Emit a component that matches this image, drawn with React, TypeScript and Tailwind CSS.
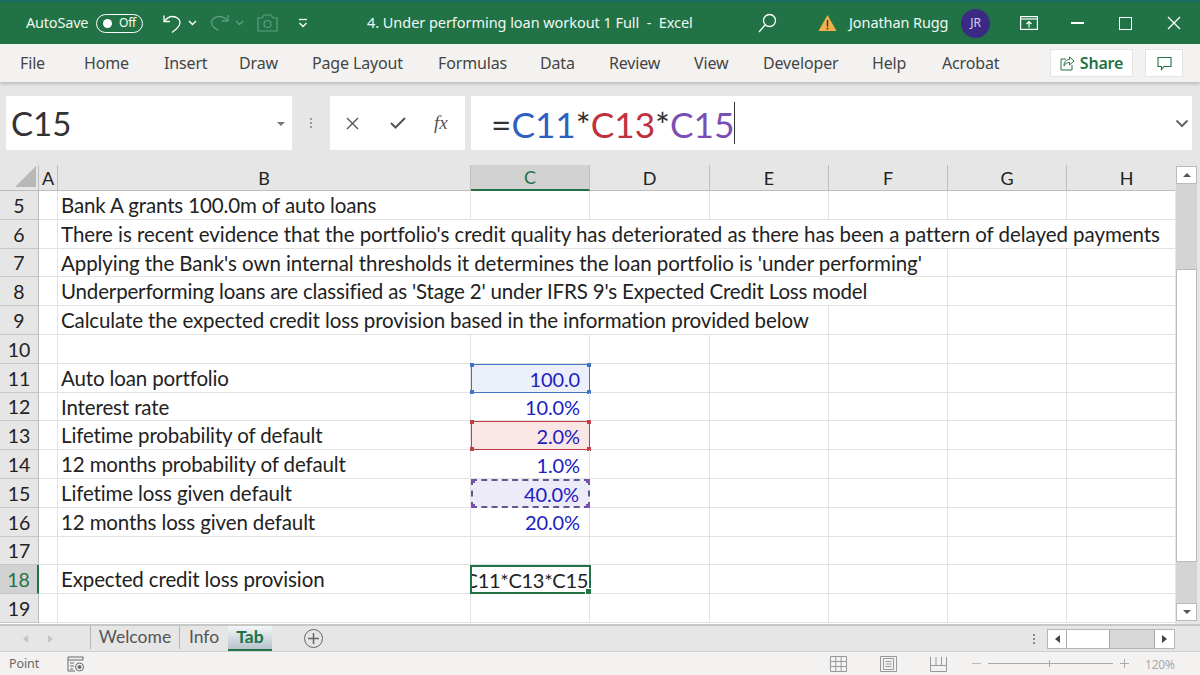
import React from "react";

const ui = "font-['Noto_Sans','Open_Sans',sans-serif]";
const cal = "font-['Lato','Noto_Sans',sans-serif]";
const cellText = "text-[20.5px] tracking-[-0.13px] pt-[1px]";
const valueText = "text-[20px] tracking-[-0.1px] pt-[1px]";

function Dots({ color }: { color: string }) {
  const p = ["left-[-2px] top-[-2px]", "right-[-2px] top-[-2px]", "left-[-2px] bottom-[-2px]", "right-[-2px] bottom-[-2px]"];
  return (
    <>
      {p.map((c) => (
        <span key={c} className={`absolute w-[4px] h-[4px] ${c} ${color}`} />
      ))}
    </>
  );
}

const RowHeader = ({ n, active }: { n: number; active?: boolean }) => (
  <div
    className={`w-[39px] shrink-0 flex items-center justify-center pt-[1px] text-[19.5px] border-b border-r ${
      active ? "bg-[#d2d2d2] text-[#217346] border-b-[#c6c6c6] border-r-2 border-r-[#217346]" : "bg-[#e6e6e6] text-[#222] border-b-[#c6c6c6] border-r-[#bdbdbd]"
    }`}
  >
    {n}
  </div>
);

const colW = ["w-[19px]", "w-[413px]", "w-[119px]", "w-[120px]", "w-[119px]", "w-[119px]", "w-[119px]", "w-[120px]"];

function Row({ n, text, active, children }: { n: number; text?: string; active?: boolean; children?: React.ReactNode }) {
  const rest = colW.slice(2);
  return (
    <div className="flex h-[28.8px]">
      <RowHeader n={n} active={active} />
      <div className="w-[19px] shrink-0 border-r border-b border-[#e2e2e2]" />
      <div className={`w-[413px] shrink-0 border-r border-b border-[#e2e2e2] pl-[3px] flex items-center whitespace-nowrap text-[#222] ${cellText}`}>{text}</div>
      {children}
      {rest.slice(children ? 1 : 0).map((w, i) => (
        <div key={i} className={`${w} shrink-0 border-r border-b border-[#e2e2e2]`} />
      ))}
    </div>
  );
}

function LongRow({ n, text, w, after, track }: { n: number; text: string; w: string; after: string[]; track: string }) {
  return (
    <div className="flex h-[28.8px]">
      <RowHeader n={n} />
      <div className="w-[19px] shrink-0 border-r border-b border-[#e2e2e2]" />
      <div className={`${w} shrink-0 border-r border-b border-[#e2e2e2] pl-[3px] pt-[1px] flex items-center whitespace-nowrap text-[#222] text-[20.5px] ${track}`}>{text}</div>
      {after.map((a, i) => (
        <div key={i} className={`${a} shrink-0 border-r border-b border-[#e2e2e2]`} />
      ))}
    </div>
  );
}

function ValueCell({ v, cls, dots, dotColor }: { v: string; cls?: string; dots?: boolean; dotColor?: string }) {
  return (
    <div className={`relative w-[119px] shrink-0 flex items-center justify-end pr-[9px] text-[#2020c0] ${valueText} ${cls ?? "border-r border-b border-[#e2e2e2]"}`}>
      {v}
      {dots && <Dots color={dotColor ?? ""} />}
    </div>
  );
}

const ColHead = ({ l, w, active }: { l: string; w: string; active?: boolean }) => (
  <div
    className={`${w} shrink-0 flex items-center justify-center pt-[1px] text-[18px] border-b border-r ${
      active ? "bg-[#d2d2d2] text-[#217346] border-b-2 border-b-[#217346] border-r-[#bdbdbd]" : "bg-[#e6e6e6] text-[#222] border-b-[#bdbdbd] border-r-[#bdbdbd]"
    }`}
  >
    {l}
  </div>
);

const Chev = ({ c = "#fff" }: { c?: string }) => (
  <svg width="9" height="6" viewBox="0 0 9 6" fill="none"><path d="M1 1l3.500 3.500L8 1" stroke={c} strokeWidth="1.400" /></svg>
);

function TitleBar() {
  return (
    <div className={`h-[44px] bg-[#217346] border-t-[2px] border-t-[#1a6a66] flex items-center text-white ${ui}`}>
      <span className="ml-[26px] text-[14.5px] text-[#eef5f0] w-[66px] tracking-[-0.2px]">AutoSave</span>
      <div className="ml-[4px] w-[47px] h-[19px] rounded-full border border-white flex items-center pl-[6px]">
        <span className="w-[9px] h-[9px] rounded-full bg-white" />
        <span className="ml-[7px] text-[12px] leading-none tracking-[-0.2px]">Off</span>
      </div>
      <svg className="ml-[20px]" width="19" height="22" viewBox="0 0 19 22" fill="none" stroke="#fff" strokeWidth="1.300">
        <path d="M1 3.500v6h6" /><path d="M1.300 9.200C3.500 6.500 6 4.500 9.500 4.500c4 0 7.500 2.400 7.500 6 0 3-2.400 6-8 10" />
      </svg>
      <span className="ml-[6px] flex"><Chev /></span>
      <svg className="ml-[12px]" width="20" height="20" viewBox="0 0 20 20" fill="none" stroke="#5f9d7c" strokeWidth="1.300">
        <path d="M19 2v6h-6" /><path d="M18.700 7.800C16.500 5.200 14 3.500 10.500 3.500c-4 0-8 2.400-8 6 0 3 2.400 5.500 7 8" />
      </svg>
      <span className="ml-[6px] flex"><Chev c="#5f9d7c" /></span>
      <svg className="ml-[13px]" width="21" height="18" viewBox="0 0 21 18" fill="none" stroke="#5f9d7c" strokeWidth="1.200">
        <path d="M1 4h4l2-3h7l2 3h4v13H1z" /><circle cx="10.500" cy="10" r="3.500" />
      </svg>
      <svg className="ml-[20px]" width="10" height="10" viewBox="0 0 10 10" fill="none" stroke="#fff" strokeWidth="1.300">
        <path d="M1 1.500h8" /><path d="M1.500 5l3.500 3.500L8.500 5" />
      </svg>
      <span className="ml-[59px] text-[14.5px] text-[#f2f7f4] w-[340px] whitespace-pre tracking-[-0.05px]">4. Under performing loan workout 1 Full  -  Excel</span>
      <svg className="ml-[51px]" width="19" height="20" viewBox="0 0 19 20" fill="none" stroke="#fff" strokeWidth="1.300">
        <circle cx="11.500" cy="7.500" r="6" /><path d="M7 12L1 19" />
      </svg>
      <svg className="ml-[41px]" width="19" height="18" viewBox="0 0 19 18">
        <path d="M9.500 1L18.500 17H0.500z" fill="#f2b04a" /><path d="M9.500 6v6.500M9.500 13.500v2" stroke="#3a3a3a" strokeWidth="1.500" />
      </svg>
      <span className="ml-[12px] text-[14.5px] text-[#f2f7f4] w-[101px] whitespace-nowrap tracking-[-0.1px]">Jonathan Rugg</span>
      <div className="ml-[11px] w-[29px] h-[29px] rounded-full bg-[#3a2a84] flex items-center justify-center text-[12px] text-[#d8d4f0]">JR</div>
      <svg className="ml-[30px]" width="18" height="14" viewBox="0 0 18 14" fill="none" stroke="#fff" strokeWidth="1.200">
        <rect x="0.600" y="0.600" width="16.800" height="12.800" /><path d="M1 3h16" /><path d="M9 11.500V5.500M6.500 8L9 5.500 11.500 8" />
      </svg>
      <span className="ml-[33px] w-[13px] h-[1.5px] bg-white" />
      <span className="ml-[35px] w-[13px] h-[13px] border-[1.5px] border-white" />
      <svg className="ml-[35px]" width="14" height="14" viewBox="0 0 14 14" stroke="#fff" strokeWidth="1.300"><path d="M1 1l12 12M13 1L1 13" /></svg>
    </div>
  );
}

function Tabs() {
  const t = [
    ["File", "ml-[20px] w-[26px]"],
    ["Home", "ml-[38px] w-[46px]"],
    ["Insert", "ml-[34px] w-[42px]"],
    ["Draw", "ml-[33px] w-[39px]"],
    ["Page Layout", "ml-[34px] w-[92px]"],
    ["Formulas", "ml-[34px] w-[68px]"],
    ["Data", "ml-[34px] w-[35px]"],
    ["Review", "ml-[34px] w-[51px]"],
    ["View", "ml-[34px] w-[35px]"],
    ["Developer", "ml-[34px] w-[75px]"],
    ["Help", "ml-[34px] w-[36px]"],
    ["Acrobat", "ml-[34px] w-[58px]"],
  ];
  return (
    <div className={`h-[38px] bg-[#f3f2f1] flex items-center text-[16px] text-[#444] shadow-[0_2px_3px_rgba(0,0,0,0.18)] relative ${ui}`}>
      {t.map(([l, c]) => (
        <span key={l} className={`${c} whitespace-nowrap tracking-[-0.15px]`}>{l}</span>
      ))}
      <div className="ml-[50px] w-[83px] h-[28px] bg-white border border-[#e4e4e4] flex items-center justify-center gap-[5px] text-[#217346] font-semibold">
        <svg width="15" height="15" viewBox="0 0 15 15" fill="none" stroke="#217346" strokeWidth="1">
          <path d="M6 3H1v11h11V9" /><path d="M14 5L9.500 1v2.500C6 3.500 4 6 4 10c1-2.500 3-3.500 5.500-3.500V9z" />
        </svg>
        <span className="tracking-[-0.2px]">Share</span>
      </div>
      <div className="ml-[12px] w-[38px] h-[28px] bg-white border border-[#e4e4e4] flex items-center justify-center">
        <svg width="15" height="15" viewBox="0 0 15 15" fill="none" stroke="#217346" strokeWidth="1.100"><path d="M1 1.500h13v9H7l-2.500 3v-3H1z" /></svg>
      </div>
    </div>
  );
}

function FormulaBar() {
  return (
    <div className={`h-[83px] bg-[#e6e6e6] flex pt-[14px] pb-[15px] ${cal}`}>
      <div className="ml-[6px] w-[286px] bg-white flex items-center justify-between pl-[5px] pr-[7px] pt-[2px] text-[33px] text-[#333]">
        <span>C15</span>
        <span className="w-0 h-0 border-x-[4px] border-x-transparent border-t-[4px] border-t-[#777]" />
      </div>
      <div className="w-[38px] flex flex-col items-center justify-center gap-[2px]">
        <span className="w-[2px] h-[2px] bg-[#999]" /><span className="w-[2px] h-[2px] bg-[#999]" /><span className="w-[2px] h-[2px] bg-[#999]" />
      </div>
      <div className="w-[135px] bg-white flex items-center text-[#444]">
        <svg className="ml-[16px]" width="13" height="13" viewBox="0 0 13 13" stroke="#555" strokeWidth="1.400"><path d="M1 1l11 11M12 1L1 12" /></svg>
        <svg className="ml-[31px]" width="16" height="12" viewBox="0 0 16 12" fill="none" stroke="#555" strokeWidth="2"><path d="M1 6l4.500 4.500L15 1" /></svg>
        <span className="ml-[28px] italic text-[19px] font-['Liberation_Serif',serif] text-[#555]">fx</span>
      </div>
      <div className="ml-[6px] w-[721px] bg-white flex items-center justify-between pl-[20px] pr-[3px] text-[35.2px]">
        <span className="border-r border-[#333] flex items-center pt-[2px] h-[42px] whitespace-nowrap">
          <span className="text-[#333]">=</span><span className="text-[#2f5fc0]">C11</span><span className="text-[#333]">*</span>
          <span className="text-[#c0313c]">C13</span><span className="text-[#333]">*</span><span className="text-[#7a4fb5]">C15</span>
        </span>
        <svg width="14" height="9" viewBox="0 0 14 9" fill="none"><path d="M1.500 1.500L7 7l5.500-5.500" stroke="#666" strokeWidth="2" /></svg>
      </div>
    </div>
  );
}

function Sheet() {
  return (
    <div className={`flex h-[459px] bg-white ${cal}`}>
      <div className="w-[1175px] shrink-0 flex flex-col overflow-hidden">
        <div className="flex h-[26px] shrink-0">
          <div className="w-[39px] shrink-0 bg-[#e6e6e6] border-r border-b border-[#bdbdbd] flex items-end justify-end pb-[3px] pr-[2px]">
            <span className="w-0 h-0 border-l-[21px] border-l-transparent border-b-[21px] border-b-[#b8b8b8]" />
          </div>
          <ColHead l="A" w="w-[19px]" />
          <ColHead l="B" w="w-[413px]" />
          <ColHead l="C" w="w-[119px]" active />
          <ColHead l="D" w="w-[120px]" />
          <ColHead l="E" w="w-[119px]" />
          <ColHead l="F" w="w-[119px]" />
          <ColHead l="G" w="w-[119px]" />
          <ColHead l="H" w="w-[120px]" />
        </div>
        <Row n={5} text="Bank A grants 100.0m of auto loans" />
        <LongRow n={6} w="w-[1129px]" after={[]} track="tracking-[-0.05px]" text="There is recent evidence that the portfolio's credit quality has deteriorated as there has been a pattern of delayed payments" />
        <LongRow n={7} w="w-[890px]" after={["w-[119px]", "w-[120px]"]} track="tracking-[-0.08px]" text="Applying the Bank's own internal thresholds it determines the loan portfolio is 'under performing'" />
        <LongRow n={8} w="w-[890px]" after={["w-[119px]", "w-[120px]"]} track="tracking-[-0.17px]" text="Underperforming loans are classified as 'Stage 2' under IFRS 9's Expected Credit Loss model" />
        <LongRow n={9} w="w-[771px]" after={["w-[119px]", "w-[119px]", "w-[120px]"]} track="tracking-[-0.12px]" text="Calculate the expected credit loss provision based in the information provided below" />
        <Row n={10} />
        <Row n={11} text="Auto loan portfolio">
          <ValueCell v="100.0" cls="bg-[#ecf0fb] border border-[#4472c4]" dots dotColor="bg-[#4472c4]" />
        </Row>
        <Row n={12} text="Interest rate">
          <ValueCell v="10.0%" />
        </Row>
        <Row n={13} text="Lifetime probability of default">
          <ValueCell v="2.0%" cls="bg-[#fbe6e6] border border-[#c0404a]" dots dotColor="bg-[#c0404a]" />
        </Row>
        <Row n={14} text="12 months probability of default">
          <ValueCell v="1.0%" />
        </Row>
        <Row n={15} text="Lifetime loss given default">
          <ValueCell v="40.0%" cls="bg-[#eeebf8] border-2 border-dashed border-[#5c5c8a]" dots dotColor="bg-[#7a4fb5]" />
        </Row>
        <Row n={16} text="12 months loss given default">
          <ValueCell v="20.0%" />
        </Row>
        <Row n={17} />
        <Row n={18} text="Expected credit loss provision" active>
          <div className="relative w-[121px] shrink-0 ml-[-1px] mr-[-1px] border-2 border-[#217346] flex items-center justify-end">
            <div className="w-full overflow-hidden flex justify-end pr-[1px] pt-[1px] text-[#222] whitespace-nowrap text-[20px] tracking-[-0.3px]">=C11*C13*C15</div>
            <span className="absolute right-[-3px] bottom-[-3px] w-[5px] h-[5px] bg-[#217346] border border-white box-content" />
          </div>
        </Row>
        <Row n={19} />
      </div>
      <div className="flex-1 bg-[#e6e6e6] flex flex-col pl-[1px] pr-[3px] pt-[1px]">
        <div className="h-[18px] bg-white border border-[#bbb] flex items-center justify-center shrink-0">
          <span className="w-0 h-0 border-x-[4px] border-x-transparent border-b-[4px] border-b-[#555]" />
        </div>
        <div className="h-[85px] bg-[#d4d4d4] shrink-0" />
        <div className="h-[293px] bg-white border border-[#bbb] shrink-0" />
        <div className="flex-1 bg-[#d4d4d4]" />
        <div className="h-[18px] mb-[3px] bg-white border border-[#bbb] flex items-center justify-center shrink-0">
          <span className="w-0 h-0 border-x-[4px] border-x-transparent border-t-[4px] border-t-[#555]" />
        </div>
      </div>
    </div>
  );
}

function SheetTabs() {
  return (
    <div className={`h-[27px] bg-[#e6e6e6] border-t-2 border-[#c8c8c8] flex items-stretch text-[#555] ${cal}`}>
      <span className="ml-[23px] self-center w-0 h-0 border-y-[4px] border-y-transparent border-r-[5px] border-r-[#c4c4c4]" />
      <span className="ml-[20px] self-center w-0 h-0 border-y-[4px] border-y-transparent border-l-[5px] border-l-[#c4c4c4]" />
      <div className="ml-[37px] mb-[2px] w-[90px] border-l border-r border-[#b5b5b5] flex items-center justify-center text-[17.5px]">Welcome</div>
      <div className="w-[48px] mb-[2px] flex items-center justify-center text-[17.5px]">Info</div>
      <div className="w-[44px] bg-linear-to-b from-[#f4f6f8] to-[#b7c3cd] border-b-2 border-[#217346] flex items-center justify-center text-[17.5px] font-bold text-[#217346]">Tab</div>
      <div className="ml-[32px] self-center w-[19px] h-[19px] rounded-full border border-[#666] flex items-center justify-center">
        <svg width="11" height="11" viewBox="0 0 11 11" stroke="#666" strokeWidth="1.500"><path d="M5.500 0v11M0 5.500h11" /></svg>
      </div>
      <div className="ml-[710px] self-center flex flex-col gap-[2px]">
        <span className="w-[2px] h-[2px] bg-[#888]" /><span className="w-[2px] h-[2px] bg-[#888]" /><span className="w-[2px] h-[2px] bg-[#888]" />
      </div>
      <div className="ml-[12px] self-center h-[20px] w-[128px] flex border border-[#b5b5b5] bg-[#d8d8d8]">
        <div className="w-[19px] bg-white border-r border-[#aaa] flex items-center justify-center">
          <span className="w-0 h-0 border-y-[4px] border-y-transparent border-r-[5px] border-r-[#444]" />
        </div>
        <div className="w-[43px] bg-white border-r border-[#aaa]" />
        <div className="flex-1" />
        <div className="w-[20px] bg-white border-l border-[#aaa] flex items-center justify-center">
          <span className="w-0 h-0 border-y-[4px] border-y-transparent border-l-[5px] border-l-[#444]" />
        </div>
      </div>
    </div>
  );
}

function StatusBar() {
  return (
    <div className={`h-[24px] bg-[#f3f2f1] border-t border-[#d0d0d0] flex items-center text-[#666] ${ui}`}>
      <span className="ml-[9px] pt-[2px] text-[12.5px] tracking-[-0.1px] w-[31px]">Point</span>
      <svg className="ml-[27px]" width="18" height="16" viewBox="0 0 18 16" fill="none" stroke="#666" strokeWidth="1">
        <path d="M1 1h15v3H1zM1 4v11h7" /><path d="M3 7h4M3 10h4M3 13h3" /><circle cx="12.500" cy="11" r="4" /><circle cx="12.500" cy="11" r="1.500" fill="#666" />
      </svg>
      <svg className="ml-[745px]" width="17" height="16" viewBox="0 0 17 16" fill="none" stroke="#999" strokeWidth="1">
        <path d="M.5.500h16v15H.500zM.500 5.500h16M.500 10.500h16M5.800.500v15M11.200.500v15" />
      </svg>
      <svg className="ml-[33px]" width="17" height="16" viewBox="0 0 17 16" fill="none" stroke="#999" strokeWidth="1">
        <path d="M.5.500h16v15H.500z" /><path d="M3.500 2.500h10v11h-10zM5.500 5.500h6M5.500 8h6M5.500 10.500h6" />
      </svg>
      <svg className="ml-[33px]" width="17" height="16" viewBox="0 0 17 16" fill="none" stroke="#999" strokeWidth="1">
        <path d="M.5 1v14.500h16V1M.500 9.500h16M6 1v8.500M11.500 1v8.500" />
      </svg>
      <span className="ml-[25px] w-[9px] h-[1px] bg-[#bbb]" />
      <div className="ml-[7px] w-[125px] h-[1px] bg-[#aaa] relative">
        <span className="absolute left-[61px] top-[-3px] w-[1px] h-[7px] bg-[#aaa]" />
      </div>
      <svg className="ml-[7px]" width="9" height="9" viewBox="0 0 9 9" stroke="#aaa" strokeWidth="1"><path d="M4.500 0v9M0 4.500h9" /></svg>
      <span className="ml-[16px] pt-[2px] text-[12px] text-[#aaa] tracking-[-0.2px]">120%</span>
    </div>
  );
}

export default function App() {
  return (
    <div className="w-[1200px] h-[675px] overflow-hidden flex flex-col bg-white">
      <TitleBar />
      <Tabs />
      <FormulaBar />
      <Sheet />
      <SheetTabs />
      <StatusBar />
    </div>
  );
}
